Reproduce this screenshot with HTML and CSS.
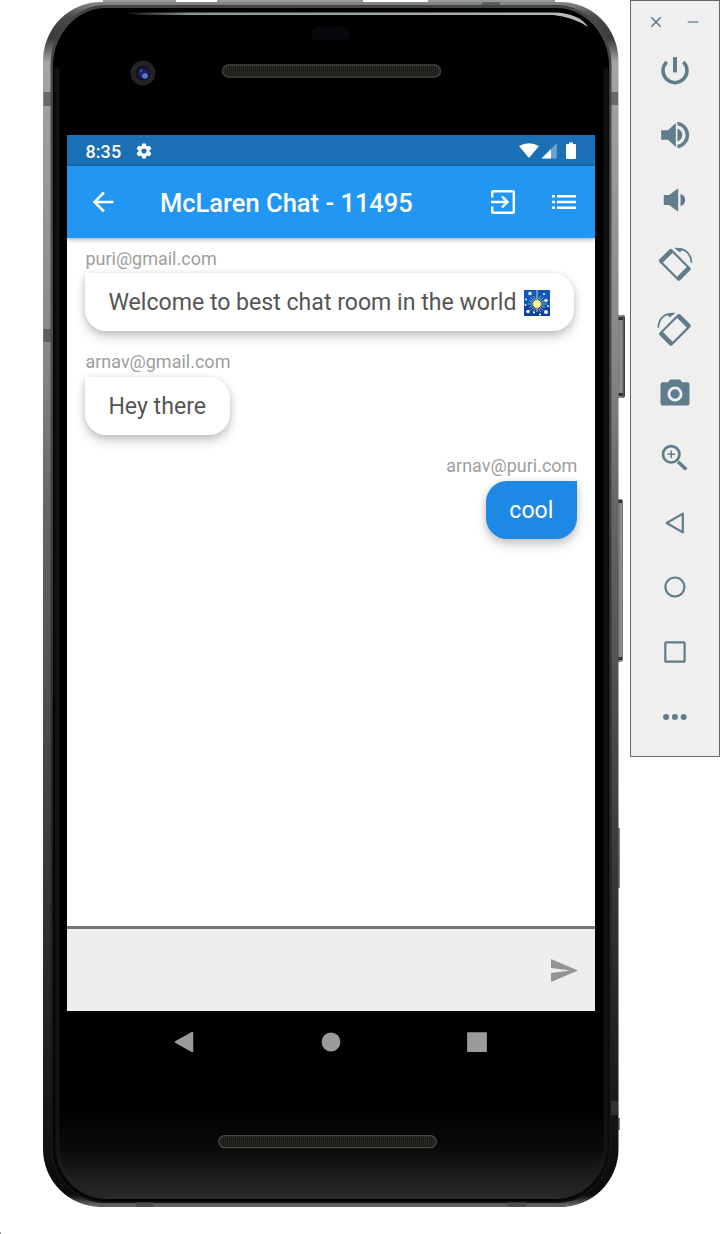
FILE: index.html
```html
<!DOCTYPE html>
<html lang="en">
<head>
<meta charset="utf-8">
<title>McLaren Chat</title>
<link rel="stylesheet" href="styles.css">
</head>
<body>
<main class="stage">
  <svg class="device-frame" viewBox="0 0 720 1234" aria-hidden="true">
    <defs>
      <linearGradient id="metal" x1="0" y1="0" x2="0" y2="1">
        <stop offset="0" stop-color="#8a8a8a"/><stop offset=".012" stop-color="#4a4a4a"/><stop offset=".03" stop-color="#3a3a3a"/><stop offset=".05" stop-color="#a5a5a5"/>
        <stop offset=".3" stop-color="#858585"/><stop offset=".42" stop-color="#666"/><stop offset=".65" stop-color="#444"/>
        <stop offset=".83" stop-color="#262626"/><stop offset=".99" stop-color="#0a0a0a"/><stop offset="1" stop-color="#777"/>
      </linearGradient>
      <linearGradient id="rim" x1="0" y1="0" x2="0" y2="1">
        <stop offset="0" stop-color="#444"/><stop offset=".3" stop-color="#4c4c4c"/><stop offset=".6" stop-color="#2c2c2c"/><stop offset="1" stop-color="#111"/>
      </linearGradient>
      <linearGradient id="chin" x1="0" y1="0" x2="0" y2="1">
        <stop offset="0" stop-color="#000"/><stop offset=".45" stop-color="#0b0b0b"/><stop offset="1" stop-color="#2b2b2b"/>
      </linearGradient>
      <linearGradient id="shine" x1="0" y1="0" x2="1" y2="0">
        <stop offset="0" stop-color="#8a9694" stop-opacity="0"/><stop offset=".15" stop-color="#8a9694"/><stop offset="1" stop-color="#b5bdbc"/>
      </linearGradient>
      <linearGradient id="key" x1="0" y1="0" x2="1" y2="0">
        <stop offset="0" stop-color="#666"/><stop offset=".6" stop-color="#929292"/><stop offset="1" stop-color="#333"/>
      </linearGradient>
      <pattern id="mesh" width="2" height="2" patternUnits="userSpaceOnUse"><path d="M0 0H1V2H0Z" fill="#2b2924"/><path d="M1 0H2V2H1Z" fill="#1b1916"/></pattern>
      <filter id="soft" x="-5%" y="-5%" width="110%" height="110%"><feGaussianBlur stdDeviation="1.500"/></filter>
    </defs>
    <path d="M103 0H176V3H103ZM217 0H363V3H217ZM428 0H555V3H428Z" fill="#999"/>
    <path d="M616 316q0-1 1-1h6q2 0 2 3v77q0 3-2 3h-7ZM616 499h5q2 0 2 3v157q0 3-2 3h-5ZM616 828h4v60h-4ZM616 1118h4v12h-4Z" fill="url(#key)"/>
    <path d="M618 317h5v3h-5ZM618 393h5v3h-5ZM617 500h5v3h-5ZM617 657h5v3h-5Z" fill="#333"/>
    <path d="M101 2H560A58 59 0 0 1 618.500 61V1149A58 58 0 0 1 560 1207H101A58 58 0 0 1 43 1149V61A58 59 0 0 1 101 2Z" fill="url(#metal)"/>
    <path d="M98 1205.500H566" stroke="#5e5e5e" stroke-width="2.600"/>
    <path d="M106 5H556A55 60 0 0 1 611.500 65V1148A55 55 0 0 1 556 1203H106A55 55 0 0 1 50.500 1148V65A55 60 0 0 1 106 5Z" fill="url(#rim)"/>
    <path d="M106 8H556A53 58 0 0 1 609 66V1148A53 53 0 0 1 556 1201H106A53 53 0 0 1 53 1148V66A53 58 0 0 1 106 8Z" fill="#000"/>
    <path d="M57 1110H605V1148A50 50 0 0 1 555 1199H107A50 50 0 0 1 57 1148Z" fill="url(#chin)"/>
    <path d="M57 68V1146A50 50 0 0 0 107 1197M606 68V1146A50 50 0 0 1 556 1197" fill="none" stroke="#242424" stroke-width="2.500" filter="url(#soft)"/>
    <path d="M43.500 92h7.500v14h-7.500ZM43.500 329h7.500v13h-7.500ZM611 92h7v13h-7ZM482 2h18v5h-18ZM611 1101h7v14h-7ZM136 1202h18v5h-18ZM508 1202h18v5h-18Z" fill="#444" fill-opacity=".6"/>
    <path d="M120 12.500H556Q580 14 588 27Q573 17 553 15H140Z" fill="url(#shine)"/>
    <rect x="311" y="27" width="39" height="13.500" rx="6.700" fill="#07080c"/>
    <circle cx="143" cy="73" r="12.500" fill="#242222"/><circle cx="143" cy="73" r="7.400" fill="#10122a"/>
    <circle cx="143.500" cy="73.500" r="5" fill="#1c2264"/><circle cx="145" cy="76" r="2.800" fill="#5d77d6"/><circle cx="141" cy="70.500" r="1.300" fill="#4151b8"/>
    <rect x="222.500" y="65" width="218" height="12" rx="6" fill="url(#mesh)" stroke="#45433f" stroke-width="1.300"/>
    <rect x="218.800" y="1135.700" width="217.500" height="12" rx="6" fill="url(#mesh)" stroke="#4b4945" stroke-width="1.300"/>
    <path d="M0 1232.500h1.200v1.500H0Z" fill="#777"/>
  </svg>

  <section class="phone">
    <div class="screen">
      <div class="status">
        <span class="clock">8:35</span>
        <svg class="gear" viewBox="0 0 24 24"><path fill="#fff" fill-rule="evenodd" d="M19.430 12.980c.04-.32.07-.64.07-.98s-.03-.66-.07-.98l2.110-1.650c.19-.15.24-.42.12-.64l-2-3.460c-.12-.22-.39-.3-.61-.22l-2.490 1c-.52-.4-1.080-.73-1.690-.98l-.38-2.650C14.460 2.180 14.250 2 14 2h-4c-.25 0-.46.18-.49.42l-.38 2.650c-.61.25-1.170.59-1.690.98l-2.490-1c-.23-.09-.49 0-.61.22l-2 3.460c-.13.22-.07.49.12.64l2.110 1.650c-.04.32-.07.65-.07.98s.03.66.07.98l-2.110 1.650c-.19.15-.24.42-.12.64l2 3.460c.12.22.39.3.61.22l2.490-1c.52.4 1.080.73 1.690.98l.38 2.650c.03.24.24.42.49.42h4c.25 0 .46-.18.49-.42l.38-2.650c.61-.25 1.170-.59 1.690-.98l2.490 1c.23.09.49 0 .61-.22l2-3.460c.12-.22.07-.49-.12-.64l-2.110-1.650zM12 15.500c-1.930 0-3.500-1.570-3.500-3.500s1.570-3.500 3.500-3.500 3.500 1.570 3.500 3.500-1.570 3.500-3.500 3.500z"/></svg>
        <svg class="signals" viewBox="0 0 58 18"><path d="M0 4Q10-1.500 20 4L10 16Z" fill="#fff"/><path d="M22.500 16.500L37.800 1V16.500Z" fill="#6ba3d3"/><path d="M22.500 16.500L32 7V16.500Z" fill="#fff"/><path d="M47 3q0-1 1-1h2V.5h4V2h2q1 0 1 1v13q0 1-1 1h-8q-1 0-1-1Z" fill="#fff"/></svg>
      </div>
      <header class="appbar">
        <svg class="back" viewBox="0 0 22 22"><path d="M21.500 11H2M12 1.500L2.500 11l9.500 9.500" fill="none" stroke="#fff" stroke-width="2.500"/></svg>
        <h1 class="title">McLaren Chat - 11495</h1>
        <svg class="exit" viewBox="0 0 24 24"><path d="M1.200 7.500V2.500Q1.200 1.200 2.500 1.200H21.500Q22.800 1.200 22.800 2.500V21.500Q22.800 22.800 21.500 22.800H2.500Q1.200 22.800 1.200 21.500V16.500M0 12H16M11 6.500L16.500 12L11 17.500" fill="none" stroke="#fff" stroke-width="2.400"/></svg>
        <svg class="list" viewBox="0 0 24 16"><path d="M0 2.200H3M5 2.200H24M0 8H3M5 8H24M0 13.800H3M5 13.800H24" stroke="#fff" stroke-width="2.500"/></svg>
      </header>
      <div class="messages">
        <article class="message">
          <p class="sender">puri@gmail.com</p>
          <div class="bubble wide"><span>Welcome to best chat room in the world</span>
            <svg class="sparkler" viewBox="0 0 26 26"><rect width="26" height="26" fill="#0f57b8"/><path d="M0 14L26 18V26H0Z" fill="#0c40a5"/><g stroke="#d9d98e" stroke-width=".7"><path d="M3.500 14H22.500M6.500 7.500L19.500 20.500M6.500 20.500L19.500 7.500M9.500 6L16.500 22M16.500 6L9.500 22M5 10.500L21 17.500M5 17.500L21 10.500"/><path d="M13 0V22" stroke-width="1"/></g><circle cx="13" cy="14" r="3.800" fill="#fff58b"/><g fill="#f2f6ff"><circle cx="6" cy="3.500" r="1.800"/><circle cx="20" cy="4" r="1.100"/><circle cx="22" cy="10.500" r="1.700"/><circle cx="2" cy="9.500" r="1"/><circle cx="24" cy="16" r="1"/><circle cx="22" cy="22" r="2"/><circle cx="16" cy="24.500" r="1.100"/><circle cx="10" cy="22.500" r="1.100"/><circle cx="4" cy="21.500" r="1.800"/><circle cx="1.500" cy="15" r="1"/></g></svg>
          </div>
        </article>
        <article class="message">
          <p class="sender">arnav@gmail.com</p>
          <div class="bubble"><span>Hey there</span></div>
        </article>
        <article class="message own">
          <p class="sender">arnav@puri.com</p>
          <div class="bubble"><span>cool</span></div>
        </article>
      </div>
      <footer class="composer">
        <svg class="send" viewBox="0 0 27 23"><path d="M0 0L27 11.500L0 23V14L19 11.500L0 9Z" fill="#949494"/></svg>
      </footer>
    </div>
    <nav class="nav">
      <svg viewBox="-11 -11 22 22"><path d="M-8.500 0L8.500-9.500V9.500Z" fill="#9b9b9b" stroke="#9b9b9b" stroke-width="1.500" stroke-linejoin="round"/></svg>
      <svg viewBox="-11 -11 22 22"><circle r="9.400" fill="#9b9b9b"/></svg>
      <svg viewBox="-11 -11 22 22"><rect x="-9.900" y="-9.700" width="19.800" height="19.800" rx="1.200" fill="#9b9b9b"/></svg>
    </nav>
  </section>

  <aside class="toolbar">
    <div class="window-controls">
      <svg viewBox="-6 -6 12 12"><path d="M-4.700-4.700L4.700 4.700M4.700-4.700L-4.700 4.700" fill="none" stroke="#5f7d8c" stroke-width="1.600"/></svg>
      <svg viewBox="-6 -6 12 12"><path d="M-5.300 0H5.300" stroke="#7c949f" stroke-width="1.600"/></svg>
    </div>
    <svg class="tool" viewBox="-20 -20 40 40"><path d="M-8.300-9A12 12 0 1 0 8.300-9" fill="none" stroke="#607d8b" stroke-width="3.500"/><rect x="-2" y="-14" width="4" height="15.500" rx=".8" fill="#607d8b"/></svg>
    <svg class="tool" viewBox="-20 -20 40 40"><path d="M-13.800-4.800H-7L.8-12V12L-7 4.800H-13.800ZM2.400-6.300A6.500 6.500 0 0 1 2.400 6.300Z" fill="#607d8b"/><path d="M2.400-11.400A11.500 11.500 0 0 1 2.400 11.400" fill="none" stroke="#607d8b" stroke-width="3.500"/></svg>
    <svg class="tool" viewBox="-20 -20 40 40"><path d="M-11.200-5H-5.800L3.200-11.700V11.700L-5.800 5H-11.200ZM5.500-6A6.200 6.200 0 0 1 5.500 6Z" fill="#607d8b"/></svg>
    <svg class="tool" viewBox="-20 -20 40 40"><g transform="translate(-.2 .8) rotate(45)"><path fill="#607d8b" fill-rule="evenodd" d="M-12.700-9H12.700Q14.700-9 14.700-7V7Q14.700 9 12.700 9H-12.700Q-14.700 9-14.700 7V-7Q-14.700-9-12.700-9ZM-10-6.800V6.800H10V-6.800Z"/></g><path d="M1-15.400Q15.500-15.500 16.500-1.300" fill="none" stroke="#607d8b" stroke-width="1.700"/><path d="M-.8-16.300L8-15.600L5-11.500Z" fill="#607d8b"/></svg>
    <svg class="tool" viewBox="-20 -20 40 40"><g transform="translate(-.3 0) scale(-1 1)"><g transform="translate(-.2 .8) rotate(45)"><path fill="#607d8b" fill-rule="evenodd" d="M-12.700-9H12.700Q14.700-9 14.700-7V7Q14.700 9 12.700 9H-12.700Q-14.700 9-14.700 7V-7Q-14.700-9-12.700-9ZM-10-6.800V6.800H10V-6.800Z"/></g><path d="M1-15.400Q15.500-15.500 16.500-1.300" fill="none" stroke="#607d8b" stroke-width="1.700"/><path d="M-.8-16.300L8-15.600L5-11.500Z" fill="#607d8b"/></g></svg>
    <svg class="tool" viewBox="-20 -20 40 40"><path d="M-12.500-11.700H-7L-5-14.500H5L7-11.700H12.500Q14.500-11.700 14.500-9.700V9.500Q14.500 11.500 12.500 11.500H-12.500Q-14.500 11.500-14.500 9.500V-9.700Q-14.500-11.700-12.500-11.700Z" fill="#607d8b"/><circle r="6.100" fill="none" stroke="#efefef" stroke-width="2.800"/></svg>
    <svg class="tool" viewBox="-20 -20 40 40"><g fill="none" stroke="#607d8b"><circle cx="-3.800" cy="-3.700" r="8.200" stroke-width="2.700"/><path d="M3 3.700L11.300 11.500" stroke-width="3.600"/><path d="M-7.500-3.700H-.1M-3.800-7.400V0" stroke-width="1.500"/></g></svg>
    <svg class="tool" viewBox="-20 -20 40 40"><path d="M-8.300 0L7.800-9.400V9.400Z" fill="none" stroke="#607d8b" stroke-width="2.200" stroke-linejoin="round"/></svg>
    <svg class="tool" viewBox="-20 -20 40 40"><circle cx="-.1" r="9.500" fill="none" stroke="#607d8b" stroke-width="2.200"/></svg>
    <svg class="tool" viewBox="-20 -20 40 40"><rect x="-9.700" y="-9.600" width="19.300" height="19.300" rx=".8" fill="none" stroke="#607d8b" stroke-width="2.200"/></svg>
    <svg class="tool" viewBox="-20 -20 40 40"><g fill="#607d8b"><circle cx="-8.900" r="3"/><circle cx="-.1" r="3"/><circle cx="8.700" r="3"/></g></svg>
  </aside>
</main>
</body>
</html>
```
FILE: styles.css
```css
* { box-sizing: border-box; }
body { margin: 0; background: #fff; font-family: Roboto, "Noto Sans", sans-serif; }
svg { display: block; flex: none; }
.stage { position: relative; z-index: 0; display: flex; align-items: flex-start; width: 720px; height: 1234px; overflow: hidden; }
.device-frame { position: absolute; inset: 0; width: 720px; height: 1234px; z-index: -1; }
.phone { width: 587px; padding: 135px 35px 0 24px; margin-left: 43.400px; flex: none; }
.screen { display: flex; flex-direction: column; height: 876px; background: #fff; }
.status { display: flex; align-items: center; height: 31px; padding: 0 18px; background: #1b70b5; color: #fff; }
.clock { width: 50px; font-size: 18px; line-height: 31px; font-weight: 500; padding-top: 2px; letter-spacing: .1px; }
.gear { width: 18px; height: 18px; }
.signals { width: 58px; height: 18px; margin-left: auto; }
.appbar { display: flex; align-items: center; height: 71.500px; padding: 0 19px 0 25px; background: #2196f3; color: #fff; box-shadow: 0 1px 5px rgba(0, 0, 0, .4); }
.back { width: 22px; height: 22px; }
.title { flex: 1; margin: 0; padding: 2px 0 0 45.500px; font-size: 25.500px; line-height: 30px; font-weight: 500; white-space: nowrap; }
.exit { width: 24px; height: 24px; margin-right: 37.500px; }
.list { width: 24px; height: 16px; }
.messages { flex: 1; padding: 9px 18px 0; }
.message { display: flex; flex-direction: column; align-items: flex-start; height: 103.900px; }
.sender { margin: 0; height: 26.800px; font-size: 18px; line-height: 23px; color: #9e9e9e; }
.bubble { display: flex; align-items: center; gap: 8px; height: 57.500px; padding: 2px 24px 0 23px; border-radius: 0 21px 21px; background: #fff; color: #555; font-size: 23.100px; line-height: 28px; white-space: nowrap; box-shadow: 0 6px 11px rgba(0, 0, 0, .18), 0 1px 7px rgba(0, 0, 0, .13); }
.sparkler { width: 26px; height: 26px; }
.own { align-items: flex-end; }
.own .bubble { border-radius: 21px 0 21px 21px; background: #1e88e5; color: #fff; }
.composer { display: flex; align-items: center; justify-content: flex-end; height: 85px; padding: 0 17px 0 0; border-top: 3px solid #777; background: #eee; }
.send { width: 27px; height: 23px; }
.nav { display: flex; justify-content: space-between; padding: 20px 107px 0 106px; }
.nav svg { width: 22px; height: 22px; }
.toolbar { display: flex; flex-direction: column; align-items: center; width: 90px; height: 757px; padding: 0 1px 6px 0; border: 1px solid #666; background: #efefef; flex: none; margin-left: -.400px; }
.window-controls { display: flex; align-items: center; justify-content: center; gap: 24.500px; height: 37.400px; padding-top: 5px; flex: none; }
.window-controls svg { width: 12px; height: 12px; }
.tool { width: 40px; height: 40px; margin: 12.300px 0; }
```
